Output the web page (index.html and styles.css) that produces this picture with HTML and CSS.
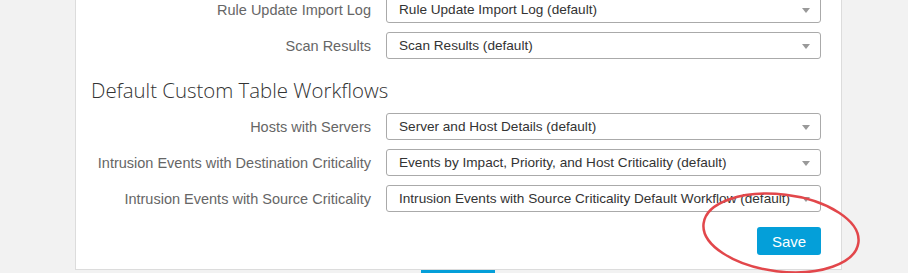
FILE: index.html
```html
<!doctype html>
<html>
<head>
	<meta charset="UTF-8">
	<meta name="viewport" content="width=device-width, initial-scale=1.0">
	<title>Workflow Defaults</title>
	<link rel="stylesheet" href="styles.css">
</head>
<body>
	<div class="panel">
		<div class="rows">
			<label>Rule Update Import Log</label>
			<div class="select">Rule Update Import Log (default)</div>
			<label>Scan Results</label>
			<div class="select">Scan Results (default)</div>
		</div>
		<h2>Default Custom Table Workflows</h2>
		<div class="rows">
			<label>Hosts with Servers</label>
			<div class="select">Server and Host Details (default)</div>
			<label>Intrusion Events with Destination Criticality</label>
			<div class="select">Events by Impact, Priority, and Host Criticality (default)</div>
			<label>Intrusion Events with Source Criticality</label>
			<div class="select">Intrusion Events with Source Criticality Default Workflow (default)</div>
		</div>
		<div class="actions">
			<button type="button" class="btn">Save</button>
		</div>
		<svg class="circle" width="170" height="100" viewBox="0 0 170 100">
			<ellipse cx="84" cy="45" rx="78" ry="38.5" transform="rotate(7 84 45)" fill="none" stroke="#e2474b" stroke-width="2.5"/>
		</svg>
	</div>
	<div class="footer">
		<button type="button" class="btn big"></button>
	</div>
</body>
</html>
```
FILE: styles.css
```css
* {
	padding: 0;
	margin: 0;
	box-sizing: border-box;
}
body {
	background-color: #f2f2f2;
	font-family: "Liberation Sans", Arial, sans-serif;
	overflow: hidden;
}
.panel {
	position: relative;
	margin: -4px 0 0 75px;
	width: 767px;
	background-color: #fff;
	border: 1px solid #dcdcdc;
	border-top: none;
	padding: 0 20px 14px 0;
}
.rows {
	display: grid;
	grid-template-columns: 295px 435px;
	column-gap: 15px;
	row-gap: 9px;
	align-items: center;
}
.rows label {
	text-align: right;
	font-size: 14.5px;
	color: #666;
}
.select {
	position: relative;
	height: 27px;
	border: 1px solid #aaa;
	border-radius: 3px;
	padding: 0 30px 0 12px;
	font-size: 13.6px;
	line-height: 25px;
	color: #333;
	white-space: nowrap;
}
.select::after {
	content: '';
	position: absolute;
	right: 10px;
	top: 11px;
	border-left: 4px solid transparent;
	border-right: 4px solid transparent;
	border-top: 5px solid #999;
}
h2 {
	font-family: "Open Sans", sans-serif;
	font-weight: 300;
	font-size: 20.4px;
	color: #333;
	padding: 17px 0 9px 15px;
	line-height: 28px;
}
.actions {
	display: flex;
	justify-content: flex-end;
	margin-top: 15px;
}
.btn {
	background-color: #049fd9;
	color: #fff;
	border: none;
	border-radius: 3px;
	font-family: "Liberation Sans", Arial, sans-serif;
	font-size: 15px;
	width: 64px;
	height: 28px;
}
.circle {
	position: absolute;
	right: -26px;
	bottom: -19px;
}
.footer {
	padding-left: 421px;
	margin-top: -4px;
}
.big {
	width: 74px;
	height: 30px;
}
```
